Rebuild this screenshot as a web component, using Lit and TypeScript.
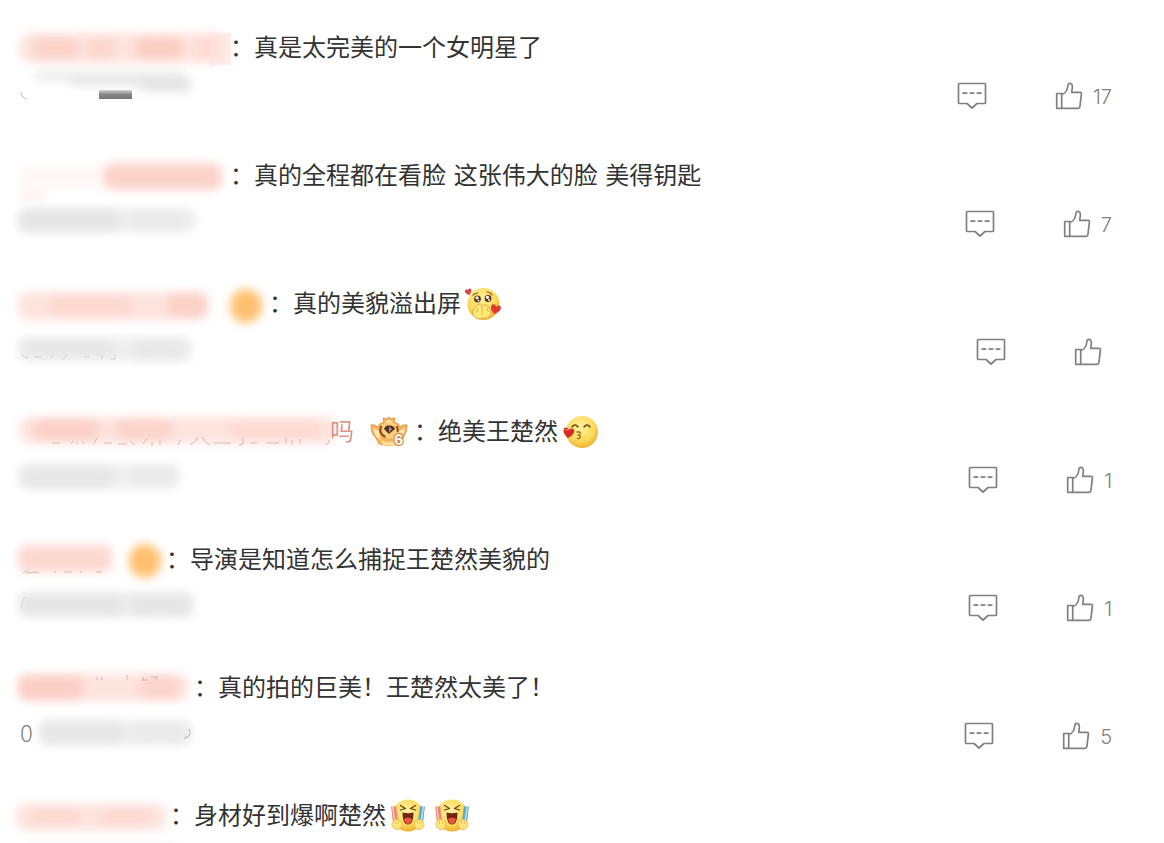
import { LitElement, html, svg, css, nothing } from "lit";
import { customElement, property } from "lit/decorators.js";

type Tone = "rose" | "blush" | "ash" | "amber";
/** x, y, width, height, tone, opacity */
type Blob = [number, number, number, number, Tone, number];

interface Comment {
  nameWidth: number;
  name: Blob[];
  nameExtra?: unknown;
  nameTail?: string;
  badge?: boolean;
  text: string;
  emoji?: string[];
  dateBlobs: Blob[];
  dateExtra?: unknown;
  dateLead?: string;
  likes?: number;
}

const comments: Comment[] = [
  {
    nameWidth: 210,
    name: [
      [0, 9, 206, 30, "blush", 0.9],
      [12, 14, 46, 20, "rose", 0.5],
      [68, 14, 26, 20, "rose", 0.4],
      [116, 14, 46, 20, "rose", 0.7],
      [178, 14, 22, 20, "rose", 0.3],
    ],
    nameExtra: svg`<rect x="190" y="9" width="21" height="32" fill="#fce2dc" opacity="0.6"/>`,
    text: "真是太完美的一个女明星了",
    dateBlobs: [
      [14, 0, 150, 9, "ash", 0.6],
      [50, 5, 120, 9, "ash", 0.7],
      [120, 8, 50, 12, "ash", 0.7],
    ],
    dateExtra: svg`
      <defs><linearGradient id="bar" x2="0" y2="1">
        <stop offset="0" stop-color="#d4d4d4"/><stop offset="0.5" stop-color="#858585"/><stop offset="1" stop-color="#777"/>
      </linearGradient></defs>
      <rect x="79" y="18" width="33" height="9" fill="url(#bar)"/>
      <path d="M1 20q0 6 6 7" fill="none" stroke="#ccc" stroke-width="1.2"/>`,
    likes: 17,
  },
  {
    nameWidth: 210,
    name: [
      [0, 14, 90, 22, "blush", 0.25],
      [84, 11, 118, 27, "rose", 0.75],
      [0, 40, 26, 6, "blush", 0.7],
    ],
    text: "真的全程都在看脸 这张伟大的脸 美得钥匙",
    dateBlobs: [
      [-2, 8, 178, 24, "ash", 0.55],
      [0, 10, 98, 21, "ash", 0.6],
      [112, 12, 54, 19, "ash", 0.3],
    ],
    likes: 7,
  },
  {
    nameWidth: 249,
    name: [
      [-2, 12, 190, 28, "blush", 0.9],
      [30, 16, 80, 20, "rose", 0.35],
      [148, 14, 38, 22, "rose", 0.6],
      [210, 9, 32, 34, "amber", 1],
    ],
    text: "真的美貌溢出屏",
    emoji: ["shy"],
    dateBlobs: [
      [-2, 9, 174, 24, "ash", 0.5],
      [2, 12, 94, 18, "ash", 0.5],
      [112, 12, 54, 20, "ash", 0.45],
    ],
    dateExtra: svg`<path d="M1 26q3 4 7 4M14 29h8M31 31l2-4M42 31q4 0 4-5M64 29h5M82 27v4M90 31h5v-5" fill="none" stroke="#d2d2d2"/>`,
  },
  {
    nameWidth: 394,
    name: [
      [0, 9, 316, 26, "blush", 0.9],
      [14, 12, 64, 20, "rose", 0.6],
      [96, 12, 56, 20, "rose", 0.5],
      [210, 13, 90, 20, "rose", 0.25],
    ],
    nameExtra: svg`<path d="M32 35h8M51 36l2-3M57 34v2M62 33l2 3M74 36l3-6M84 35h8M98 36h9M110 33l5 4M123 36l4-6M132 34v4M140 32v5M160 32l-2 5M170 37q6-3 8-8M182 29q3 6 8 8M193 35h18M219 37l4-1v-6M230 35h7M246 35h13M266 36v-7M272 37v-5M280 36v-5M305 36q4 1 4-4" fill="none" stroke="#e3b3a8"/>`,
    nameTail: "吗",
    badge: true,
    text: "绝美王楚然",
    emoji: ["kiss"],
    dateBlobs: [
      [-2, 8, 162, 25, "ash", 0.5],
      [2, 11, 92, 20, "ash", 0.55],
      [112, 11, 44, 18, "ash", 0.35],
    ],
    likes: 1,
  },
  {
    nameWidth: 146,
    name: [
      [-2, 9, 94, 27, "rose", 0.65],
      [109, 8, 32, 34, "amber", 1],
    ],
    nameExtra: svg`<path d="M3 37l6-4M6 37l13-1M34 36h2M44 36h8M60 36h2M76 36h6" fill="none" stroke="#dfb5ac"/>`,
    text: "导演是知道怎么捕捉王楚然美貌的",
    dateBlobs: [
      [-2, 8, 176, 25, "ash", 0.6],
      [2, 11, 100, 20, "ash", 0.5],
      [112, 11, 58, 20, "ash", 0.5],
    ],
    dateExtra: svg`<path d="M5 13q-4 4-3 12" fill="none" stroke="#d8d8d8"/>`,
    likes: 1,
  },
  {
    nameWidth: 174,
    name: [
      [-2, 10, 170, 27, "blush", 0.9],
      [-1, 12, 64, 23, "rose", 0.65],
      [120, 13, 38, 21, "rose", 0.5],
    ],
    nameExtra: svg`<path d="M77 13v3M82 13v3M107 11v5M123 13v3M121 16h7M131 13h7M136 13v3" fill="none" stroke="#dfb0a5"/>`,
    text: "真的拍的巨美！王楚然太美了！",
    dateBlobs: [
      [18, 8, 154, 25, "ash", 0.55],
      [22, 11, 82, 20, "ash", 0.5],
      [114, 11, 52, 20, "ash", 0.3],
    ],
    dateExtra: svg`<path d="M169 17q3 8-5 9" fill="none" stroke="#c4c4c4" stroke-width="1.3"/>`,
    dateLead: "0",
    likes: 5,
  },
  {
    nameWidth: 150,
    name: [
      [-4, 12, 150, 26, "blush", 0.9],
      [10, 17, 50, 16, "rose", 0.3],
      [80, 17, 50, 16, "rose", 0.3],
    ],
    text: "身材好到爆啊楚然",
    emoji: ["cheer", "cheer"],
    dateBlobs: [[6, 6, 150, 22, "ash", 0.7]],
  },
];

const tones: Record<Tone, string> = {
  rose: "#fac4b8",
  blush: "#fde0da",
  ash: "#e0e0e0",
  amber: "#ffc070",
};

const blobs = (list: Blob[], extra: unknown) => html`
  <svg class="veil" aria-hidden="true">
    <defs>
      <filter id="soft" x="-50%" y="-150%" width="200%" height="400%" color-interpolation-filters="sRGB">
        <feGaussianBlur stdDeviation="5" />
      </filter>
    </defs>
    ${list.map(
      ([x, y, w, h, tone, o]) => svg`<rect x=${x} y=${y} width=${w} height=${h} rx=${tone === "amber" ? w / 2 : h / 3}
        fill=${tones[tone]} opacity=${o} filter="url(#soft)"/>`
    )}
    ${extra ?? nothing}
  </svg>
`;

const face = svg`
  <defs><radialGradient id="face" cx="0.45" cy="0.35" r="0.7">
    <stop offset="0" stop-color="#fff2a0"/><stop offset="0.6" stop-color="#fcdb5c"/><stop offset="1" stop-color="#eba92c"/>
  </radialGradient></defs>`;

const heart = "M0 3.6C-5.6 0-4-4.2-1.6-3.6-.6-3.4 0-2.4 0-2 .2-2.6.8-3.4 1.8-3.5 4.6-3.8 5 .4 0 3.6Z";

const emojiArt: Record<string, unknown> = {
  shy: svg`${face}
    <circle cx="18.500" cy="18" r="16" fill="url(#face)"/>
    <path d="M8 9q2-2 5-2M22 6q3 0 5 3" fill="none" stroke="#9b6116" stroke-width="1.200" stroke-linecap="round"/>
    <circle cx="12.500" cy="13" r="3.400" fill="#5b3517"/><circle cx="23" cy="12.500" r="3.400" fill="#5b3517"/>
    <circle cx="12" cy="11.800" r="1.600" fill="#fff"/><circle cx="22.500" cy="11.300" r="1.600" fill="#fff"/>
    <circle cx="13.500" cy="14.600" r="0.900" fill="#fff"/><circle cx="24" cy="14" r="0.900" fill="#fff"/>
    <path d="M17.500 32c-5 2-10-1-10-5 0-3 3-8 6.500-9 2-.4 3 1 3 3 1-2 2-3 4-2 3 1 5 5 5 8 0 4-4 6-8.500 5Z" fill="#ffe978" stroke="#e3a738"/>
    <path d="M17 21v9M13 22l-1.500 4M22 22l1.500 4" fill="none" stroke="#e8b03c"/>
    <path transform="translate(3.500 6) rotate(-15) scale(.85)" d=${heart} fill="#d8423a"/>
    <path transform="translate(30.500 23.500) rotate(12) scale(1.300)" d=${heart} fill="#df3a31"/>`,
  kiss: svg`${face}
    <circle cx="20" cy="18" r="16" fill="url(#face)"/>
    <path d="M10 13q3-4 6 0M22 13q3-4 6 0" fill="none" stroke="#74440f" stroke-width="1.500" stroke-linecap="round"/>
    <path d="M15 18c4-1 4 2 1.500 3 3 1 2 4-1 3.500" fill="none" stroke="#a86012" stroke-width="1.300" stroke-linecap="round"/>
    <path transform="translate(6.500 19) rotate(8) scale(1.400)" d=${heart} fill="#d92b26"/>
    <path d="M3.500 16q1.500-1 2.500 0" fill="none" stroke="#ff8d80" stroke-linecap="round"/>`,
  cheer: svg`${face}
    <circle cx="18" cy="17.500" r="16" fill="url(#face)"/>
    <path d="M10.500 7.500l5 3-5 1.500M25.500 7.500l-5 3 5 1.500" fill="none" stroke="#6b3b12" stroke-width="1.300" stroke-linecap="round" stroke-linejoin="round"/>
    <path d="M12.500 14.500q6 1.500 11 0 0 12-5.500 12t-5.500-12Z" fill="#742414"/>
    <path d="M14 21q4-3 8 0-1 5-4 5t-4-5Z" fill="#ea5542"/>
    <path d="M3.500 8.500l2 14" stroke="#ec8578" stroke-width="5" stroke-linecap="butt"/>
    <path d="M2.700 8.500l2 14" stroke="#ffc8bc" stroke-width="1.500"/>
    <path d="M32.500 8.500l-2 14" stroke="#5fa9cc" stroke-width="5" stroke-linecap="butt"/>
    <path d="M33.300 8.500l-2 14" stroke="#bde4f0" stroke-width="1.500"/>
    <circle cx="7" cy="26.500" r="5" fill="#ffe57a" stroke="#e7b345" stroke-width="0.800"/>
    <circle cx="29" cy="26.500" r="5" fill="#ffe57a" stroke="#e7b345" stroke-width="0.800"/>
    <path d="M5.500 23v3M8.500 23v3M27.500 23v3M30.500 23v3" stroke="#eebc45" stroke-width="0.800"/>`,
};

@customElement("comment-row")
class CommentRow extends LitElement {
  @property({ attribute: false }) comment!: Comment;

  static styles = css`
    :host {
      display: block;
      padding: 24px 52px 8px 20px;
    }
    .line {
      display: flex;
      align-items: center;
      height: 48px;
    }
    .name {
      display: flex;
      align-items: center;
      justify-content: flex-end;
      position: relative;
      flex: none;
      height: 48px;
      line-height: 48px;
      color: #d98270;
      text-decoration: none;
    }
    .veil {
      position: absolute;
      inset: 0;
      width: 100%;
      height: 100%;
      overflow: visible;
    }
    .tail {
      position: relative;
      opacity: 0.85;
    }
    .badge {
      width: 38px;
      height: 32px;
      margin: 0 6px 0 16px;
    }
    .text {
      margin: 0;
      font-family: "DejaVu Sans", "Noto Sans CJK SC", sans-serif;
      font-size: 24px;
      line-height: 48px;
      color: #333;
    }
    .emoji {
      width: 36px;
      height: 36px;
      margin: 0 4px;
    }
    .meta {
      justify-content: space-between;
    }
    .date {
      position: relative;
      width: 174px;
      height: 48px;
      font-family: "Noto Sans CJK SC", sans-serif;
      font-weight: 300;
      line-height: 40px;
      color: #808080;
    }
    .actions {
      display: flex;
      align-items: center;
      gap: 68px;
    }
    .action {
      display: flex;
      align-items: center;
      gap: 10px;
      padding: 0;
      border: 0;
      background: none;
      color: #808080;
      font: 300 20px/28px Inter, "Noto Sans", sans-serif;
      cursor: pointer;
    }
    .count {
      padding-top: 2px;
    }
    .icon {
      fill: none;
      stroke: #808080;
      stroke-width: 1.7;
      stroke-linejoin: round;
    }
    .level {
      font: 800 14px Inter, sans-serif;
      fill: #fff;
      stroke: #dc7428;
      stroke-width: 2px;
      paint-order: stroke;
    }
  `;

  render() {
    const c = this.comment;
    return html`
      <div class="line">
        <a class="name" href="#" aria-label="用户主页" style="width:${c.nameWidth}px">
          ${blobs(c.name, c.nameExtra)}
          ${c.nameTail ? html`<span class="tail">${c.nameTail}</span>` : nothing}
          ${c.badge
            ? html`<svg class="badge" viewBox="0 0 38 32" aria-hidden="true">
                <path d="M1 9q4-1 7 2 1-4 6-5l-1-4 4 1 2-2 2 2 4-1-1 4q5 1 6 5 3-3 7-2 0 9-5 13l-3 6q-10 3-20 0l-3-6Q1 18 1 9Z" fill="#f6b45c" stroke="#e09a4c"/>
                <path d="M3 12l6 3 2 9q-7-3-8-12ZM35 12l-6 3-2 9q7-3 8-12Z" fill="#ffe5b3"/>
                <path d="M15 4l2 1 2-2 2 2 2-1-1 4h-6ZM11 24q8 4 16 0l-2 5q-6 1-12 0Z" fill="#ffdf9c"/>
                <ellipse cx="19" cy="14.500" rx="10.500" ry="8" fill="#ffcf7c"/>
                <path d="M11.500 10q-4 7 4 11M26.500 10q2 3 1 6" fill="none" stroke="#93501f" stroke-width="2.200"/>
                <path d="M15 11l2-1.500h4l3 1.500 1 2-6 5-5-5Z" fill="#503127"/>
                <path d="M19 10.500l3 2.500-3 4Z" fill="#b98a78"/>
                <text class="level" x="24" y="29">6</text>
              </svg>`
            : nothing}
        </a>
        <p class="text">：${c.text}</p>
        ${c.emoji?.map(
          (e) => html`<svg class="emoji" viewBox="0 0 36 36" aria-hidden="true">${emojiArt[e]}</svg>`
        )}
      </div>
      <div class="line meta">
        <div class="date">${c.dateLead ?? nothing}${blobs(c.dateBlobs, c.dateExtra)}</div>
        <div class="actions">
          <button class="action" aria-label="评论">
            <svg class="icon" width="30" height="28" viewBox="0 0 30 28">
              <path d="M2.500 1.500h25q1 0 1 1v18q0 1-1 1h-7.500l-5 4.500-5-4.500h-7.500q-1 0-1-1v-18q0-1 1-1Z" />
              <path d="M5.500 11.200h4.800M12.600 11.200h4.800M19.700 11.200h4.800" />
            </svg>
          </button>
          <button class="action" aria-label="赞">
            <svg class="icon" width="28" height="28" viewBox="0 0 28 28">
              <path d="M1.700 11.500h5v14.800h-5ZM6.700 12.500c4.300-1.400 5.500-3.400 6-8 .2-2.300 1-3.200 2.200-3.200 2 0 2.600 2 2.400 4.600l-.6 4.400h8.300q1.600 0 1.400 1.600l-1.500 12.700q-.2 1.700-1.800 1.700H6.700" />
            </svg>
            <span class="count">${c.likes ?? nothing}</span>
          </button>
        </div>
      </div>
    `;
  }
}

@customElement("app-root")
class AppRoot extends LitElement {
  static styles = css`
    :host {
      display: block;
      height: 100vh;
      overflow: hidden;
      background: #fff;
      font-family: Inter, "Noto Sans CJK SC", sans-serif;
      font-size: 24px;
    }
  `;

  render() {
    return html`<main>
      ${comments.map((c) => html`<comment-row .comment=${c}></comment-row>`)}
    </main>`;
  }
}
